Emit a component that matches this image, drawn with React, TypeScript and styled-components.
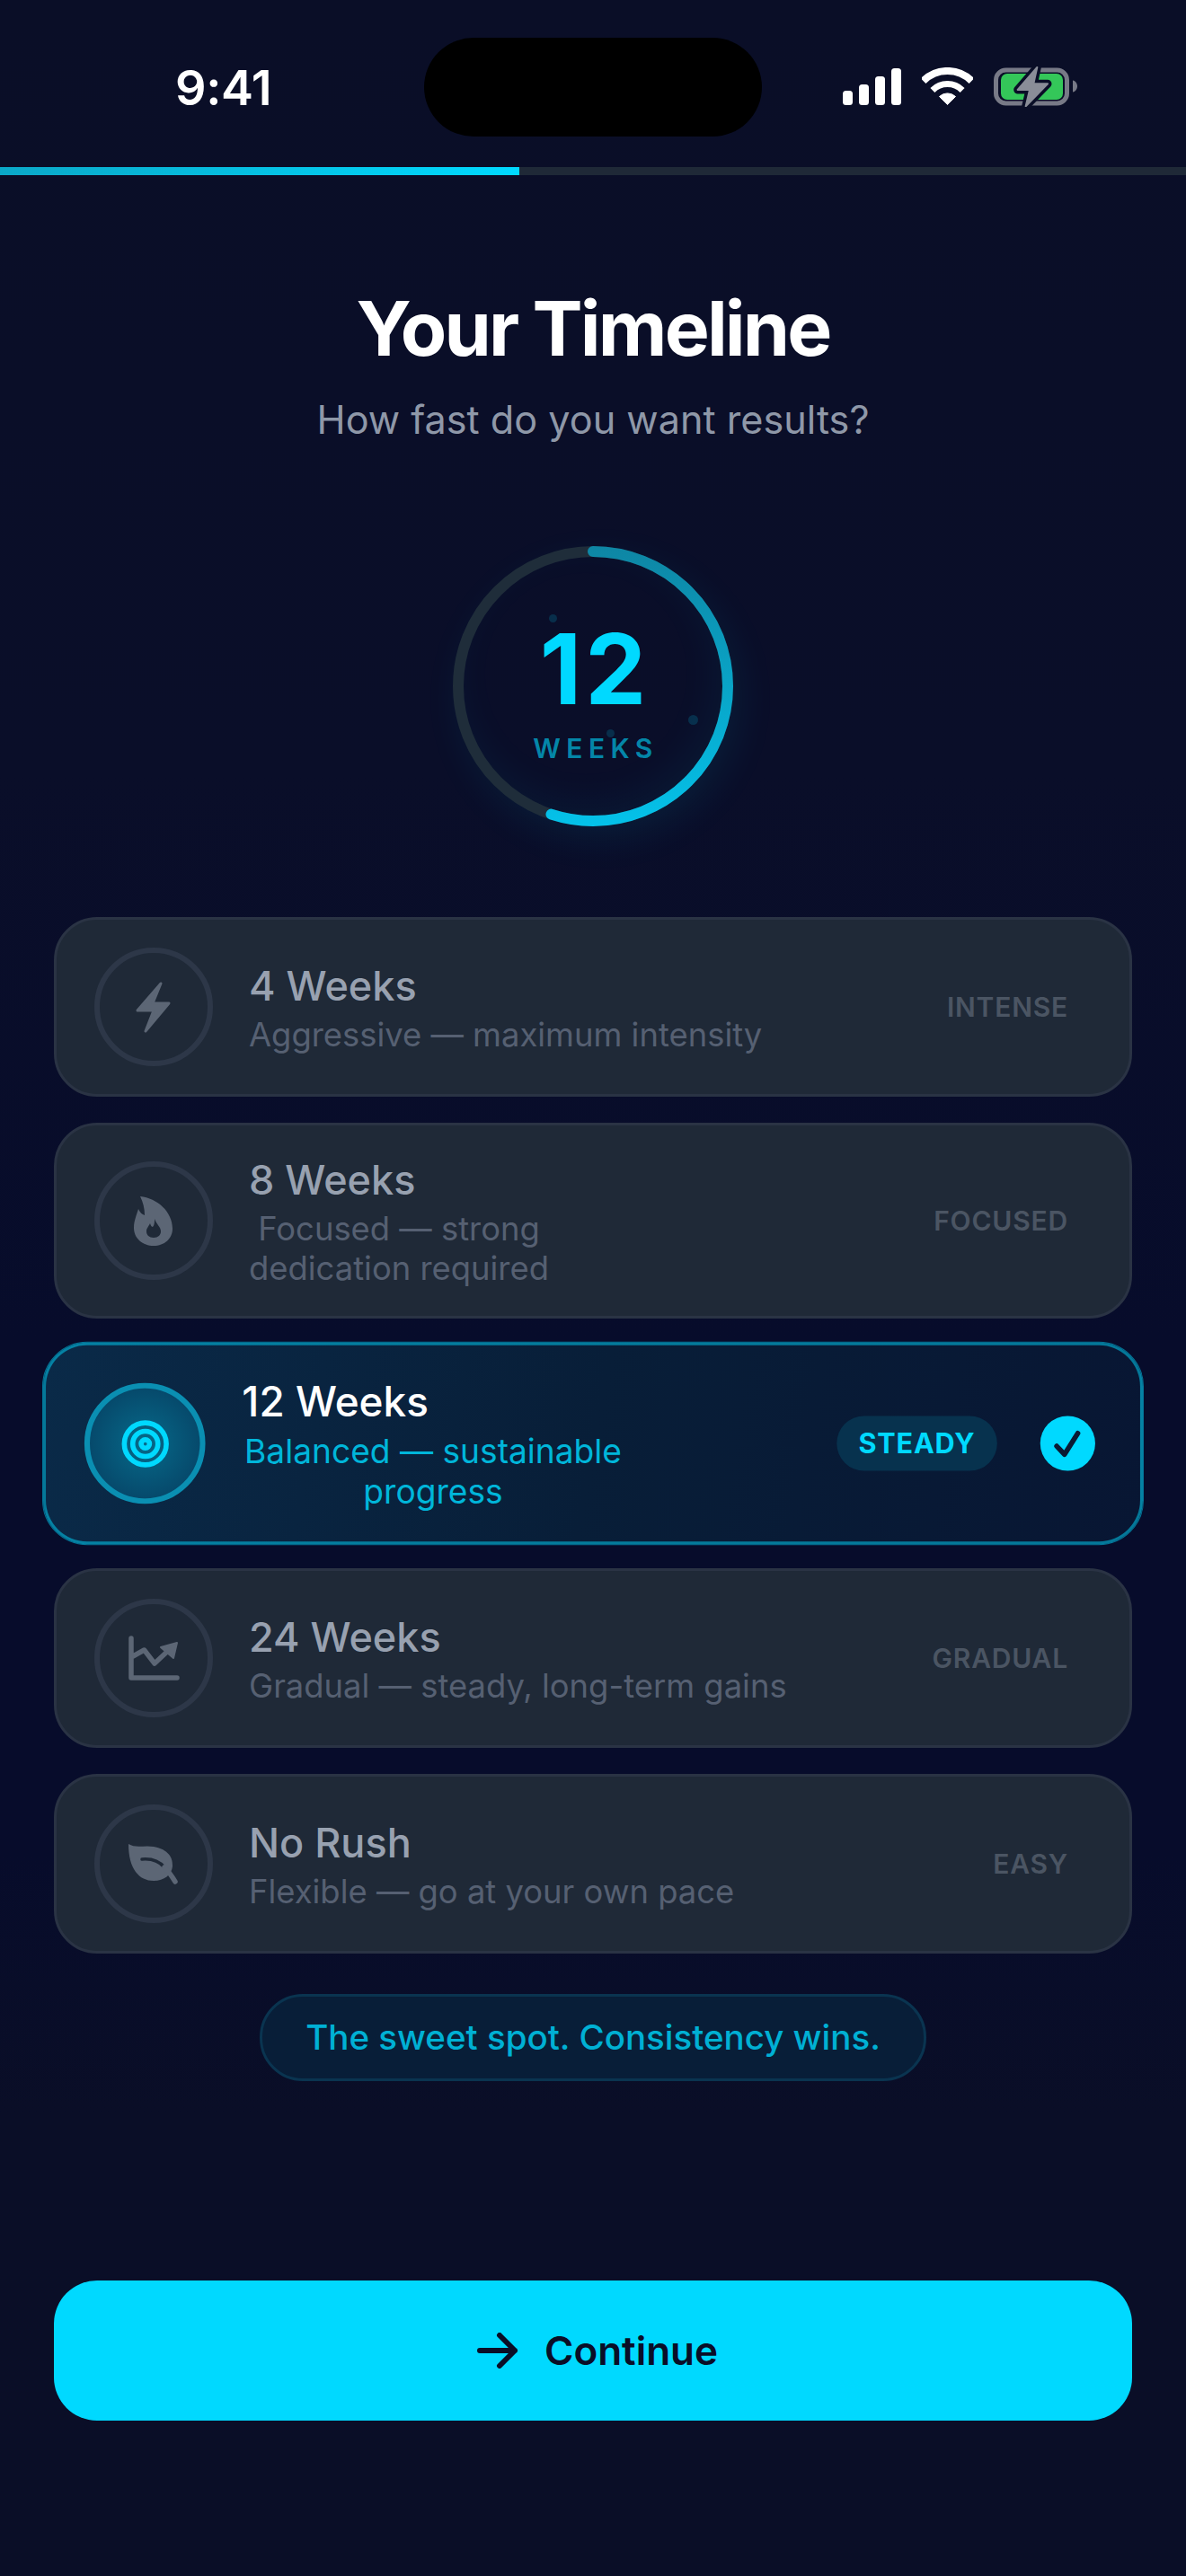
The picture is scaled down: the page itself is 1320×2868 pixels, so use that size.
import { ReactNode } from 'react';
import styled, { createGlobalStyle } from 'styled-components';
import { Target } from 'lucide-react';

const GlobalStyle = createGlobalStyle`
  html, body {
    margin: 0;
    padding: 0;
    background: #0a0e27;
  }
  * {
    box-sizing: border-box;
  }
`;

const Page = styled.div`
  width: 1320px;
  height: 2868px;
  overflow: hidden;
  font-family: Inter, 'Liberation Sans', sans-serif;
  background: linear-gradient(180deg, #0a0e27 0%, #0a0e29 30%, #070c2b 52%, #070c2b 72%, #0a0e27 82%);
`;

const StatusBar = styled.div`
  display: grid;
  grid-template-columns: 472px 376px 1fr;
  height: 186px;
  padding-top: 42px;
`;

const Time = styled.div`
  padding: 24px 0 0 195px;
  font-size: 54px;
  line-height: 64px;
  font-weight: 600;
  color: #fff;
  letter-spacing: -0.4px;
`;

const Island = styled.div`
  height: 110px;
  border-radius: 55px;
  background: #000;
`;

const StatusIcons = styled.div`
  display: flex;
  align-items: flex-start;
  padding: 32px 0 0 90px;
`;

const SignalIcon = styled.svg`
  display: block;
  margin: 2px 23px 0 0;
`;

const WifiIcon = styled.svg`
  display: block;
  margin: 1px 23px 0 0;
`;

const BatteryIcon = styled.svg`
  display: block;
`;

const ProgressTrack = styled.div`
  height: 9px;
  background: #1f2937;
`;

const ProgressFill = styled.div`
  height: 100%;
  background: linear-gradient(90deg, #0ba8c8, #00d9ff);
`;

const Header = styled.div`
  text-align: center;
  padding-top: 121px;
`;

const Title = styled.h1`
  margin: 0;
  font-size: 84px;
  line-height: 100px;
  font-weight: 700;
  letter-spacing: -2.8px;
  color: #fff;
`;

const Subtitle = styled.p`
  margin: 24px 0 0;
  font-size: 43.2px;
  line-height: 54px;
  font-weight: 400;
  color: #8f98a8;
`;

const RingWrap = styled.div`
  position: relative;
  display: flex;
  flex-direction: column;
  align-items: center;
  width: 312px;
  height: 312px;
  margin: 114px auto 0;
`;

const RingSvg = styled.svg`
  position: absolute;
  inset: 0;
  overflow: visible;
`;

const RingHalo = styled.div`
  position: absolute;
  inset: 6px;
  border-radius: 50%;
  box-shadow: 8px 14px 50px rgba(0, 217, 255, 0.09), inset -8px -14px 50px rgba(0, 217, 255, 0.06);
`;

const Dot = styled.span<{ $x: number; $y: number; $size: number }>`
  position: absolute;
  left: ${(p) => p.$x}px;
  top: ${(p) => p.$y}px;
  width: ${(p) => p.$size}px;
  height: ${(p) => p.$size}px;
  border-radius: 50%;
  background: rgba(0, 217, 255, 0.16);
`;

const RingNumber = styled.div`
  position: relative;
  margin-top: 82px;
  padding-left: 4px;
  font-size: 108px;
  line-height: 110px;
  font-weight: 700;
  letter-spacing: 4px;
  color: #00d9ff;
`;

const RingUnit = styled.div`
  position: relative;
  margin-top: 15px;
  padding-left: 6px;
  font-size: 30px;
  line-height: 36px;
  font-weight: 600;
  letter-spacing: 6.5px;
  color: rgba(0, 217, 255, 0.62);
`;

const List = styled.div`
  display: flex;
  flex-direction: column;
  gap: 29px;
  margin: 101px 60px 0;
`;

const Card = styled.div<{ $selected?: boolean }>`
  display: flex;
  align-items: center;
  min-height: 198px;
  padding: ${(p) => (p.$selected ? '32px 49px 32px 42px' : '31px 42px')};
  border-radius: 48px;
  border: 3px solid ${(p) => (p.$selected ? 'rgba(0, 217, 255, 0.5)' : '#2a3344')};
  background: ${(p) =>
    p.$selected ? 'linear-gradient(100deg, #0a2a48 0%, #081e38 50%, #081633 100%)' : '#1f2937'};
  transform: ${(p) => (p.$selected ? 'scale(1.02)' : 'none')};
  outline: ${(p) => (p.$selected ? '1.5px solid rgba(0, 217, 255, 0.5)' : 'none')};
`;

const IconCircle = styled.div<{ $selected?: boolean }>`
  flex: none;
  display: flex;
  align-items: center;
  justify-content: center;
  width: 132px;
  height: 132px;
  border-radius: 50%;
  border: 6px solid ${(p) => (p.$selected ? '#0a8fb2' : '#2d3748')};
  background: ${(p) =>
    p.$selected ? 'radial-gradient(circle, #066a8a 0%, #064a6c 70%, #063f60 100%)' : 'transparent'};
  color: ${(p) => (p.$selected ? '#00d9ff' : '#5c6675')};
  svg {
    display: block;
  }
`;

const CardText = styled.div`
  flex: 1;
  margin-left: 40px;
`;

const CardTitle = styled.div<{ $selected?: boolean }>`
  font-size: 45px;
  line-height: 60px;
  font-weight: 500;
  color: ${(p) => (p.$selected ? '#fff' : '#98a1b0')};
`;

const CardSub = styled.div<{ $selected?: boolean }>`
  width: ${(p) => (p.$selected ? '417px' : 'auto')};
  margin-top: 2px;
  font-size: 36.4px;
  line-height: 44px;
  font-weight: 400;
  text-align: ${(p) => (p.$selected ? 'center' : 'left')};
  color: ${(p) => (p.$selected ? '#00b6da' : '#566072')};
`;

const Tag = styled.div<{ $selected?: boolean }>`
  flex: none;
  padding: ${(p) => (p.$selected ? '12px 24px' : '12px 26px')};
  border-radius: 30px;
  font-size: 30px;
  line-height: 36px;
  font-weight: ${(p) => (p.$selected ? 700 : 600)};
  letter-spacing: 0.8px;
  color: ${(p) => (p.$selected ? '#00d9ff' : '#4b5563')};
  background: ${(p) => (p.$selected ? '#07324e' : 'transparent')};
`;

const CheckBadge = styled.div`
  flex: none;
  display: flex;
  align-items: center;
  justify-content: center;
  width: 60px;
  height: 60px;
  margin-left: 47px;
  border-radius: 50%;
  background: #00d9ff;
`;

const Hint = styled.div`
  width: fit-content;
  margin: 45px auto 0;
  padding: 20px 48px;
  border-radius: 48px;
  border: 3px solid #0a3450;
  background: #081e38;
  font-size: 38.5px;
  line-height: 51px;
  font-weight: 500;
  color: #00b0d4;
`;

const ContinueButton = styled.button`
  display: flex;
  align-items: center;
  justify-content: center;
  gap: 29px;
  width: 1200px;
  height: 156px;
  margin: 222px 60px 0;
  padding-left: 16px;
  border: none;
  border-radius: 48px;
  background: #00d9ff;
  font-family: inherit;
  font-size: 44px;
  font-weight: 600;
  color: #0a0e27;
`;

const GLYPH = { width: 60, height: 60, viewBox: '0 0 60 60', fill: 'currentColor' };

const BoltGlyph = () => (
  <svg {...GLYPH}>
    <path
      d="M38 4 12 34H30L21 57 47 26H29Z"
      stroke="currentColor"
      strokeWidth="3"
      strokeLinejoin="round"
    />
  </svg>
);

const FlameGlyph = () => (
  <svg {...GLYPH}>
    <path
      fillRule="evenodd"
      d="M15 3C34 5 51 20 51 39 51 50 42 58 30 58 18 58 8 50 8 38 8 30 11 24 13 17 15 21 17 23 20 24 20 16 18 9 15 3ZM31 28C33 34 38 37 38 42 38 46 35 49 30 49 25 49 22 46 22 42 22 38 25 36 26 33 27 36 28 37 29 37 31 35 31 31 31 28Z"
    />
  </svg>
);

const ChartGlyph = () => (
  <svg {...GLYPH}>
    <path
      d="M5 8V52H56M7 28 19.5 21 31 36 47 21"
      fill="none"
      stroke="currentColor"
      strokeWidth="5.5"
      strokeLinecap="round"
      strokeLinejoin="round"
    />
    <path d="M38 18 56 13 52 30Z" stroke="currentColor" strokeWidth="2" strokeLinejoin="round" />
  </svg>
);

const LeafGlyph = () => (
  <svg {...GLYPH}>
    <path d="M2 8C10 13 20 9 30 11 42 13 52 20 51 33 50 42 42 49 30 49 14 49 2 36 2 8Z" />
    <path d="M17 25C28 24 36 27 42 34" fill="none" stroke="#1f2937" strokeWidth="3.5" strokeLinecap="round" />
    <path d="M42 34C47 39 51 45 54 50" fill="none" stroke="currentColor" strokeWidth="5.5" strokeLinecap="round" />
  </svg>
);

type Option = {
  title: string;
  sub: ReactNode;
  tag: string;
  icon: ReactNode;
  selected?: boolean;
};

const options: Option[] = [
  { title: '4 Weeks', sub: 'Aggressive — maximum intensity', tag: 'INTENSE', icon: <BoltGlyph /> },
  {
    title: '8 Weeks',
    sub: (
      <>
        &nbsp;Focused — strong
        <br />
        dedication required
      </>
    ),
    tag: 'FOCUSED',
    icon: <FlameGlyph />,
  },
  {
    title: '12 Weeks',
    sub: 'Balanced — sustainable progress',
    tag: 'STEADY',
    icon: <Target size={55} strokeWidth={2.4} />,
    selected: true,
  },
  { title: '24 Weeks', sub: 'Gradual — steady, long-term gains', tag: 'GRADUAL', icon: <ChartGlyph /> },
  { title: 'No Rush', sub: 'Flexible — go at your own pace', tag: 'EASY', icon: <LeafGlyph /> },
];

const RING_RADIUS = 150;
const RING_LENGTH = 2 * Math.PI * RING_RADIUS;
const RING_PROGRESS = 0.55;

function Ring() {
  return (
    <RingWrap>
      <RingHalo />
      <RingSvg width="312" height="312" viewBox="0 0 312 312">
        <defs>
          {/* the arc is rotated -90deg, so this runs top to bottom on screen */}
          <linearGradient id="ringStroke" gradientUnits="userSpaceOnUse" x1="312" y1="0" x2="0" y2="0">
            <stop offset="0" stopColor="#0e86a4" />
            <stop offset="1" stopColor="#04c2ea" />
          </linearGradient>
        </defs>
        <circle cx="156" cy="156" r={RING_RADIUS} fill="none" stroke="#1f2d3a" strokeWidth="12" />
        <circle
          cx="156"
          cy="156"
          r={RING_RADIUS}
          fill="none"
          stroke="url(#ringStroke)"
          strokeWidth="12"
          strokeLinecap="round"
          strokeDasharray={`${RING_LENGTH * RING_PROGRESS} ${RING_LENGTH}`}
          transform="rotate(-90 156 156)"
        />
      </RingSvg>
      <Dot $x={107} $y={76} $size={9} />
      <Dot $x={262} $y={188} $size={11} />
      <Dot $x={171} $y={204} $size={9} />
      <RingNumber>12</RingNumber>
      <RingUnit>WEEKS</RingUnit>
    </RingWrap>
  );
}

export default function App() {
  return (
    <Page>
      <GlobalStyle />
      <StatusBar>
        <Time>9:41</Time>
        <Island />
        <StatusIcons>
          <SignalIcon width="65" height="41" viewBox="0 0 65 41" fill="#fff">
            <rect x="0" y="25" width="11" height="16" rx="3.5" />
            <rect x="18" y="18" width="11" height="23" rx="3.5" />
            <rect x="36" y="9" width="11" height="32" rx="3.5" />
            <rect x="54" y="0" width="11" height="41" rx="3.5" />
          </SignalIcon>
          <WifiIcon width="57" height="42" viewBox="0 0 57 42" fill="none" stroke="#fff">
            <path d="M1.6 15.1A38 38 0 0 1 55.4 15.1" strokeWidth="8" />
            <path d="M11.9 25.4A23.5 23.5 0 0 1 45.1 25.4" strokeWidth="7" />
            <path d="M28.5 41.5 19.5 32.5A13 13 0 0 1 37.5 32.5Z" fill="#fff" strokeWidth="1" strokeLinejoin="round" />
          </WifiIcon>
          <BatteryIcon width="93" height="45" viewBox="0 0 93 45">
            <rect x="2.5" y="4" width="79" height="37" rx="11" fill="none" stroke="#787a87" strokeWidth="5" />
            <path d="M88 15.5C91 16 93 19 93 22 93 25 91 28 88 28.5Z" fill="#787a87" />
            <rect x="8" y="8" width="69" height="29" rx="7" fill="#34c759" />
            <path
              d="M48.3 1 26.7 26H40L35.7 44.3 60 19.3H44.3Z"
              fill="#8a8d98"
              stroke="#0a0e27"
              strokeWidth="9"
              strokeLinejoin="round"
              paintOrder="stroke"
            />
            <path d="M48.3 1 26.7 26H40L35.7 44.3 60 19.3H44.3Z" fill="#8a8d98" stroke="#8a8d98" strokeWidth="2" strokeLinejoin="round" />
          </BatteryIcon>
        </StatusIcons>
      </StatusBar>

      <ProgressTrack>
        <ProgressFill style={{ width: `${(578 / 1320) * 100}%` }} />
      </ProgressTrack>

      <Header>
        <Title>Your Timeline</Title>
        <Subtitle>How fast do you want results?</Subtitle>
      </Header>

      <Ring />

      <List>
        {options.map((option) => (
          <Card key={option.title} $selected={option.selected}>
            <IconCircle $selected={option.selected}>{option.icon}</IconCircle>
            <CardText>
              <CardTitle $selected={option.selected}>{option.title}</CardTitle>
              <CardSub $selected={option.selected}>{option.sub}</CardSub>
            </CardText>
            <Tag $selected={option.selected}>{option.tag}</Tag>
            {option.selected && (
              <CheckBadge>
                <svg width="36" height="36" viewBox="0 0 36 36" fill="none">
                  <path
                    d="M6 21 14.5 30 29 7"
                    stroke="#0a1a33"
                    strokeWidth="5.5"
                    strokeLinecap="round"
                    strokeLinejoin="round"
                  />
                </svg>
              </CheckBadge>
            )}
          </Card>
        ))}
      </List>

      <Hint>The sweet spot. Consistency wins.</Hint>

      <ContinueButton>
        <svg width="46" height="40" viewBox="0 0 46 40" fill="none">
          <path
            d="M3 20H42M25 3 42 20 25 37"
            stroke="#0a0e27"
            strokeWidth="6"
            strokeLinecap="round"
            strokeLinejoin="round"
          />
        </svg>
        Continue
      </ContinueButton>
    </Page>
  );
}
